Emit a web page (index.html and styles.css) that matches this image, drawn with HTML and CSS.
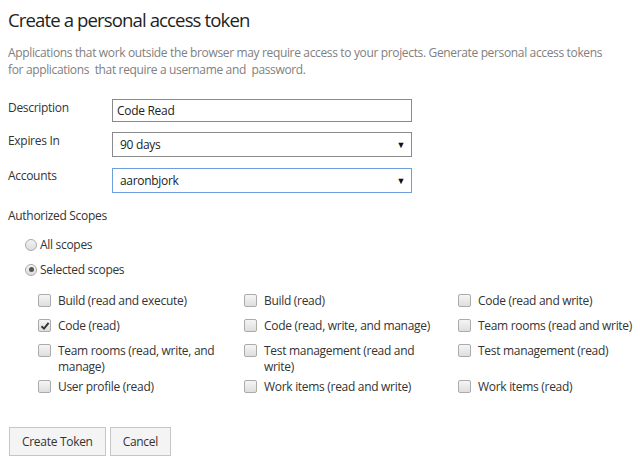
FILE: index.html
```html
<!DOCTYPE html>
<html>
<head>
<meta charset="utf-8">
<link rel="stylesheet" href="styles.css">
</head>
<body>
<div class="page">
  <h1 class="title">Create a personal access token</h1>
  <p class="intro">Applications that work outside the browser may require access to your projects. Generate personal access tokens<br>for applications&nbsp; that require a username and&nbsp; password.</p>

  <div class="form">
    <label class="label">Description</label>
    <div class="field input">Code Read</div>
    <label class="label">Expires In</label>
    <div class="field select"><span>90 days</span><span class="arrow">▼</span></div>
    <label class="label">Accounts</label>
    <div class="field select focus"><span>aaronbjork</span><span class="arrow">▼</span></div>
  </div>

  <div class="section-label">Authorized Scopes</div>
  <div class="radios">
    <div class="radio-row"><span class="radio"></span><span>All scopes</span></div>
    <div class="radio-row"><span class="radio on"><span class="dot"></span></span><span>Selected scopes</span></div>
  </div>

  <div class="scopes">
    <div class="scope"><span class="box"></span><span class="txt">Build (read and execute)</span></div>
    <div class="scope"><span class="box"></span><span class="txt">Build (read)</span></div>
    <div class="scope"><span class="box"></span><span class="txt">Code (read and write)</span></div>

    <div class="scope"><span class="box"><svg width="10" height="10" viewBox="0 0 10 10"><path d="M1.5 5.2 L4 7.6 L8.6 1.8" fill="none" stroke="#333" stroke-width="1.9"/></svg></span><span class="txt">Code (read)</span></div>
    <div class="scope"><span class="box"></span><span class="txt">Code (read, write, and manage)</span></div>
    <div class="scope"><span class="box"></span><span class="txt">Team rooms (read and write)</span></div>

    <div class="scope"><span class="box"></span><span class="txt">Team rooms (read, write, and manage)</span></div>
    <div class="scope"><span class="box"></span><span class="txt">Test management (read and write)</span></div>
    <div class="scope"><span class="box"></span><span class="txt">Test management (read)</span></div>

    <div class="scope"><span class="box"></span><span class="txt">User profile (read)</span></div>
    <div class="scope"><span class="box"></span><span class="txt">Work items (read and write)</span></div>
    <div class="scope"><span class="box"></span><span class="txt">Work items (read)</span></div>
  </div>

  <div class="buttons">
    <button class="btn">Create Token</button>
    <button class="btn">Cancel</button>
  </div>
</div>
</body>
</html>
```

FILE: styles.css
```css
* { box-sizing: border-box; }
body {
  margin: 0;
  background: #fff;
  font-family: "Open Sans", "Noto Sans", sans-serif;
  font-size: 12px;
  color: #333;
}
.page {
  padding: 8px 0 0 8px;
  width: 640px;
}
.title {
  margin: 0;
  font-weight: 400;
  font-size: 18.6px;
  line-height: 24px;
  color: #1e1e1e;
  letter-spacing: -0.9px;
}
.intro {
  margin: 12px 0 0 0;
  color: #808080;
  font-size: 12px;
  line-height: 17px;
  letter-spacing: -0.35px;
}
.form {
  margin-top: 21px;
  display: grid;
  grid-template-columns: 104px 300px;
  row-gap: 10px;
  align-items: start;
}
.label {
  padding-top: 1px;
  line-height: 15px;
  letter-spacing: -0.3px;
}
.field {
  height: 23px;
  border: 1px solid #8a8a8a;
  display: flex;
  align-items: center;
  padding: 0 6px 0 4px;
  color: #222;
  letter-spacing: -0.3px;
}
.select {
  height: 25px;
  justify-content: space-between;
  padding-left: 7px;
}
.select.focus {
  border-color: #6f9ee0;
  margin-top: 1px;
}
.arrow {
  font-size: 9px;
  color: #111;
}
.section-label {
  margin-top: 15px;
  line-height: 15px;
  letter-spacing: -0.3px;
}
.radios {
  margin-top: 14px;
  padding-left: 17px;
  display: flex;
  flex-direction: column;
  gap: 10px;
}
.radio-row {
  display: flex;
  align-items: center;
  gap: 3px;
  line-height: 15px;
  letter-spacing: -0.3px;
}
.radio {
  width: 12px;
  height: 12px;
  border-radius: 50%;
  border: 1px solid #a9a9a9;
  background: linear-gradient(#f4f4f4, #dcdcdc);
  display: flex;
  align-items: center;
  justify-content: center;
}
.dot {
  width: 5px;
  height: 5px;
  border-radius: 50%;
  background: #555;
}
.scopes {
  margin-top: 16px;
  margin-left: 30px;
  display: grid;
  grid-template-columns: 206px 214px 190px;
  row-gap: 4px;
}
.scope {
  display: flex;
  align-items: flex-start;
  gap: 7px;
  min-height: 21px;
  line-height: 16px;
  letter-spacing: -0.3px;
  padding-right: 12px;
}
.scope:nth-child(3n) {
  padding-right: 0;
}
.box {
  flex: none;
  width: 13px;
  height: 13px;
  margin-top: 1px;
  border: 1px solid #ababab;
  border-radius: 2px;
  background: linear-gradient(#f5f5f5, #dedede);
  display: flex;
  align-items: center;
  justify-content: center;
}
.buttons {
  margin-top: 27px;
  margin-left: 1px;
  display: flex;
  gap: 4px;
}
.btn {
  height: 29px;
  padding: 0 12px;
  border: 1px solid #c6c6c6;
  background: #f4f4f4;
  font-family: inherit;
  font-size: 12px;
  color: #333;
  letter-spacing: -0.3px;
}
```
